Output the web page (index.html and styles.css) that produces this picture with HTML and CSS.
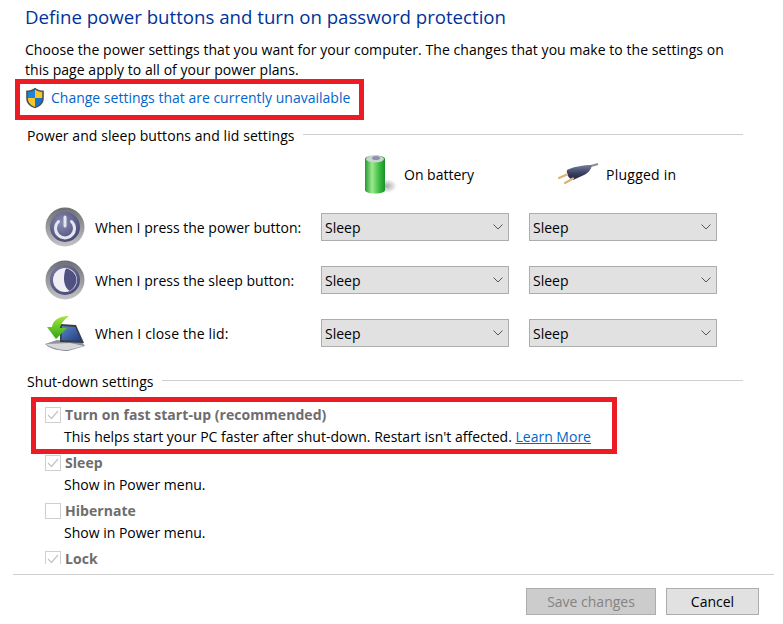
FILE: index.html
```html
<!DOCTYPE html>
<html lang="en">
<head>
<meta charset="utf-8">
<title>Define power buttons</title>
<link rel="stylesheet" href="styles.css">
</head>
<body>
<main class="page">
  <h1 class="title">Define power buttons and turn on password protection</h1>
  <p class="desc">Choose the power settings that you want for your computer. The changes that you make to the settings on this page apply to all of your power plans.</p>
  <div class="callout callout-top">
    <svg class="shield" viewBox="0 0 20 22" width="20" height="22">
      <path d="M10 .8C7.500 2.800 4.500 3.600 1.200 3.600v7.600c0 5 3.600 8.400 8.800 10 5.200-1.600 8.800-5 8.800-10V3.600C15.500 3.600 12.500 2.800 10 .8z" fill="#4a4f55"/>
      <path d="M10 2.500V11H2.800V4.900C5.500 4.800 8 4 10 2.500z" fill="#1e84d8"/>
      <path d="M10 2.500c2 1.500 4.500 2.300 7.200 2.400V11H10z" fill="#f7c52c"/>
      <path d="M2.800 11H10v8.900C5.700 18.500 2.900 15.500 2.800 11z" fill="#f7c52c"/>
      <path d="M10 11h7.200c-.1 4.500-2.900 7.500-7.200 8.900z" fill="#1873c4"/>
    </svg>
    <a class="link" href="#">Change settings that are currently unavailable</a>
  </div>

  <div class="group-head group-power"><span>Power and sleep buttons and lid settings</span><i></i></div>

  <div class="power-grid">
    <div class="col-head col-battery">
      <svg viewBox="0 0 40 42" width="40" height="42">
        <defs>
          <linearGradient id="bat" x1="0" x2="1" y1="0" y2="0">
            <stop offset="0" stop-color="#1f9a2c"/><stop offset=".35" stop-color="#9fe98f"/><stop offset=".7" stop-color="#3cc044"/><stop offset="1" stop-color="#1b8f2a"/>
          </linearGradient>
          <radialGradient id="batshadow"><stop offset="0" stop-color="#888" stop-opacity=".7"/><stop offset="1" stop-color="#888" stop-opacity="0"/></radialGradient>
        </defs>
        <ellipse cx="27" cy="33" rx="10" ry="7" fill="url(#batshadow)"/>
        <path d="M5 6c0-2 4-3.500 10-3.500S25 4 25 6v31c0 2-4 3.500-10 3.500S5 39 5 37z" fill="url(#bat)"/>
        <ellipse cx="15" cy="6" rx="9" ry="3.500" fill="#c9d6cf"/>
        <ellipse cx="16" cy="5" rx="4" ry="2" fill="#8f90b0"/>
      </svg>
      <span>On battery</span>
    </div>
    <div class="col-head col-plug">
      <svg viewBox="0 0 42 24" width="42" height="24">
        <defs>
          <linearGradient id="plug" x1="0" x2="0" y1="0" y2="1">
            <stop offset="0" stop-color="#767e9c"/><stop offset=".55" stop-color="#3a4060"/><stop offset="1" stop-color="#20243a"/>
          </linearGradient>
        </defs>
        <path d="M33 4L40 2" stroke="#8a8d99" stroke-width="2" fill="none"/>
        <path d="M9 8C14 5 26 3 34 3 33 8 30 11 26 13L15 18C11 17 8 12 9 8z" fill="url(#plug)"/>
        <path d="M1 16L9 12.500M7 21L15 16.500" stroke="#dcb477" stroke-width="2.200" stroke-linecap="round" fill="none"/>
      </svg>
      <span>Plugged in</span>
    </div>

    <div class="row-label">
      <svg class="round" viewBox="0 0 40 40" width="40" height="40">
        <defs>
          <linearGradient id="ring" x1="0" x2="0" y1="0" y2="1"><stop offset="0" stop-color="#6d6d75"/><stop offset="1" stop-color="#c4c4c8"/></linearGradient>
          <radialGradient id="disc" cx=".4" cy=".35" r=".8"><stop offset="0" stop-color="#8a8cb4"/><stop offset="1" stop-color="#3c3f68"/></radialGradient>
        </defs>
        <circle cx="20" cy="20" r="19.500" fill="url(#ring)"/>
        <circle cx="20" cy="20" r="15" fill="url(#disc)"/>
        <path d="M13.500 14.500a9.500 9.500 0 1 0 13 0" stroke="#e6e6f0" stroke-width="3" stroke-linecap="round" fill="none"/>
        <path d="M20 10v9" stroke="#e6e6f0" stroke-width="3" stroke-linecap="round"/>
      </svg>
      <span>When I press the power button:</span>
    </div>
    <div class="dropdown"><span>Sleep</span><svg viewBox="0 0 10 6" width="10" height="6"><path d="M.5.5L5 5 9.500.5" stroke="#555" fill="none"/></svg></div>
    <div class="dropdown"><span>Sleep</span><svg viewBox="0 0 10 6" width="10" height="6"><path d="M.5.5L5 5 9.500.5" stroke="#555" fill="none"/></svg></div>

    <div class="row-label">
      <svg class="round" viewBox="0 0 40 40" width="40" height="40">
        <circle cx="20" cy="20" r="19.500" fill="url(#ring)"/>
        <circle cx="20" cy="20" r="15" fill="url(#disc)"/>
        <circle cx="20" cy="20" r="12" fill="#eeeef4"/>
        <path d="M21 8.500c6 1 10.500 6 10.500 11.500 0 4-3 9-7 11-3-2-5.500-7-5.500-12 0-4 .5-7.500 2-10.500z" fill="#4f5280"/>
      </svg>
      <span>When I press the sleep button:</span>
    </div>
    <div class="dropdown"><span>Sleep</span><svg viewBox="0 0 10 6" width="10" height="6"><path d="M.5.5L5 5 9.500.5" stroke="#555" fill="none"/></svg></div>
    <div class="dropdown"><span>Sleep</span><svg viewBox="0 0 10 6" width="10" height="6"><path d="M.5.5L5 5 9.500.5" stroke="#555" fill="none"/></svg></div>

    <div class="row-label">
      <svg class="round" viewBox="0 0 40 40" width="40" height="40">
        <defs>
          <linearGradient id="scr" x1="0" x2="1" y1="0" y2="1"><stop offset="0" stop-color="#5d86cc"/><stop offset="1" stop-color="#1d3a7c"/></linearGradient>
          <linearGradient id="arr" x1="0" x2="0" y1="0" y2="1"><stop offset="0" stop-color="#a4e63c"/><stop offset="1" stop-color="#2ea516"/></linearGradient>
        </defs>
        <path d="M0 31l12-4 25 2 3 4-17 5c-9 0-18-2-23-7z" fill="#8f949b"/>
        <path d="M1 31l24-1 14 3-16 4c-8 0-16-2-22-6z" fill="#d6d8dc"/>
        <path d="M15 11l16 1 8 18-24-1z" fill="#3a3d46"/>
        <path d="M17 13l13 1 6.500 14-20-1z" fill="url(#scr)"/>
        <path d="M24 3C14 3 8 7 7 14H2l9 12 11-11h-7c1-5 4-8 9-12z" fill="url(#arr)"/>
      </svg>
      <span class="lid-label">When I close the lid:</span>
    </div>
    <div class="dropdown"><span>Sleep</span><svg viewBox="0 0 10 6" width="10" height="6"><path d="M.5.5L5 5 9.500.5" stroke="#555" fill="none"/></svg></div>
    <div class="dropdown"><span>Sleep</span><svg viewBox="0 0 10 6" width="10" height="6"><path d="M.5.5L5 5 9.500.5" stroke="#555" fill="none"/></svg></div>
  </div>

  <div class="group-head group-shut"><span>Shut-down settings</span><i></i></div>

  <div class="callout callout-fast">
    <div class="option">
      <span class="check"><svg viewBox="0 0 16 16" width="16" height="16"><path d="M3 8l3.500 3.500L13 4" stroke="#c6c6c6" stroke-width="1.300" fill="none"/></svg></span>
      <div class="option-text">
        <div class="option-name">Turn on fast start-up (recommended)</div>
        <div class="option-note">This helps start your PC faster after shut-down. Restart isn't affected. <a class="learn" href="#">Learn More</a></div>
      </div>
    </div>
  </div>
  <div class="option option-plain">
    <span class="check"><svg viewBox="0 0 16 16" width="16" height="16"><path d="M3 8l3.500 3.500L13 4" stroke="#c6c6c6" stroke-width="1.300" fill="none"/></svg></span>
    <div class="option-text">
      <div class="option-name">Sleep</div>
      <div class="option-note">Show in Power menu.</div>
    </div>
  </div>
  <div class="option option-plain">
    <span class="check"></span>
    <div class="option-text">
      <div class="option-name">Hibernate</div>
      <div class="option-note">Show in Power menu.</div>
    </div>
  </div>
  <div class="option option-plain">
    <span class="check check-cut"><svg viewBox="0 0 16 16" width="16" height="16"><path d="M3 8l3.500 3.500L13 4" stroke="#c6c6c6" stroke-width="1.300" fill="none"/></svg></span>
    <div class="option-text">
      <div class="option-name">Lock</div>
    </div>
  </div>
</main>
<footer class="footer">
  <button class="btn btn-save" type="button" disabled>Save changes</button>
  <button class="btn btn-cancel" type="button">Cancel</button>
</footer>
</body>
</html>
```
FILE: styles.css
```css
* { box-sizing: border-box; }
html, body { margin: 0; padding: 0; background: #fff; }
body {
  width: 783px;
  height: 624px;
  overflow: hidden;
  font-family: "Open Sans", "Noto Sans", "Liberation Sans", sans-serif;
  font-size: 14px;
  color: #000;
}
.page {
  height: 565px;
  padding-top: 4px;
}
.title {
  margin: 0 0 0 25px;
  font-size: 18.65px;
  line-height: 26px;
  font-weight: 400;
  color: #003399;
}
.desc {
  margin: 10px 0 0 25px;
  width: 712px;
  line-height: 20px;
  letter-spacing: .05px;
}
.callout { border: 5px solid #ed1c24; background: #fff; }
.callout-top {
  margin: -1px 0 0 15px;
  width: 349px;
  height: 41px;
  padding: 0 0 4px 5px;
  display: flex;
  align-items: center;
  gap: 6px;
}
.shield { flex: none; }
.link { color: #0066cc; text-decoration: none; }
.group-head {
  display: flex;
  align-items: center;
  margin-left: 27px;
  width: 716px;
  height: 20px;
  gap: 8px;
  letter-spacing: .07px;
}
.group-head i { flex: 1; height: 1px; background: #d0d0d0; margin-top: -2px; }
.group-power { margin-top: 5px; }
.power-grid {
  display: grid;
  grid-template-columns: 256px 188px 188px;
  grid-template-rows: 34px repeat(3, 28px);
  column-gap: 20px;
  row-gap: 25px;
  margin: 9px 0 0 45px;
}
.col-head {
  display: flex;
  align-items: center;
  height: 40px;
}
.col-battery { grid-column: 2; padding-left: 39px; gap: 4px; }
.col-plug { grid-column: 3; padding-left: 29px; gap: 6px; }
.col-plug span { letter-spacing: .25px; }
.row-label {
  grid-column: 1;
  display: flex;
  align-items: center;
  gap: 10px;
  white-space: nowrap;
  height: 28px;
}
.lid-label { letter-spacing: .15px; }
.round { flex: none; margin: -6px 0; }
.dropdown {
  height: 28px;
  background: #e1e1e1;
  border: 1px solid #adadad;
  display: flex;
  align-items: center;
  justify-content: space-between;
  padding: 0 5px 0 3px;
}
.group-shut { margin-top: 24px; }
.callout-fast {
  margin: 6px 0 -2px 31px;
  width: 586px;
  height: 57px;
  padding: 2px 0 0 9px;
}
.option { display: flex; gap: 4px; }
.option-plain { margin: 0 0 4px 45px; }
.check {
  flex: none;
  width: 16px;
  height: 16px;
  margin-top: 3px;
  border: 1px solid #cfcfcf;
  display: block;
  position: relative;
}
.check-cut { height: 13px; border-bottom: 0; overflow: hidden; }
.check svg { position: absolute; left: -1px; top: -1px; }
.option-name { font-weight: 700; color: #6d6d6d; line-height: 22px; letter-spacing: .05px; }
.option-note { line-height: 22px; margin-left: -1px; }
.learn { color: #0066cc; text-decoration: underline; }
.footer {
  margin: 9px 9px 0 13px;
  border-top: 1px solid #cfcfcf;
  display: flex;
  justify-content: flex-end;
  gap: 10px;
  padding: 13px 15px 0 0;
}
.btn {
  height: 27px;
  font: inherit;
  padding: 0;
  border: 1px solid #adadad;
}
.btn-save { width: 130px; background: #cccccc; color: #838383; }
.btn-cancel { width: 93px; background: #e1e1e1; color: #000; }
```
